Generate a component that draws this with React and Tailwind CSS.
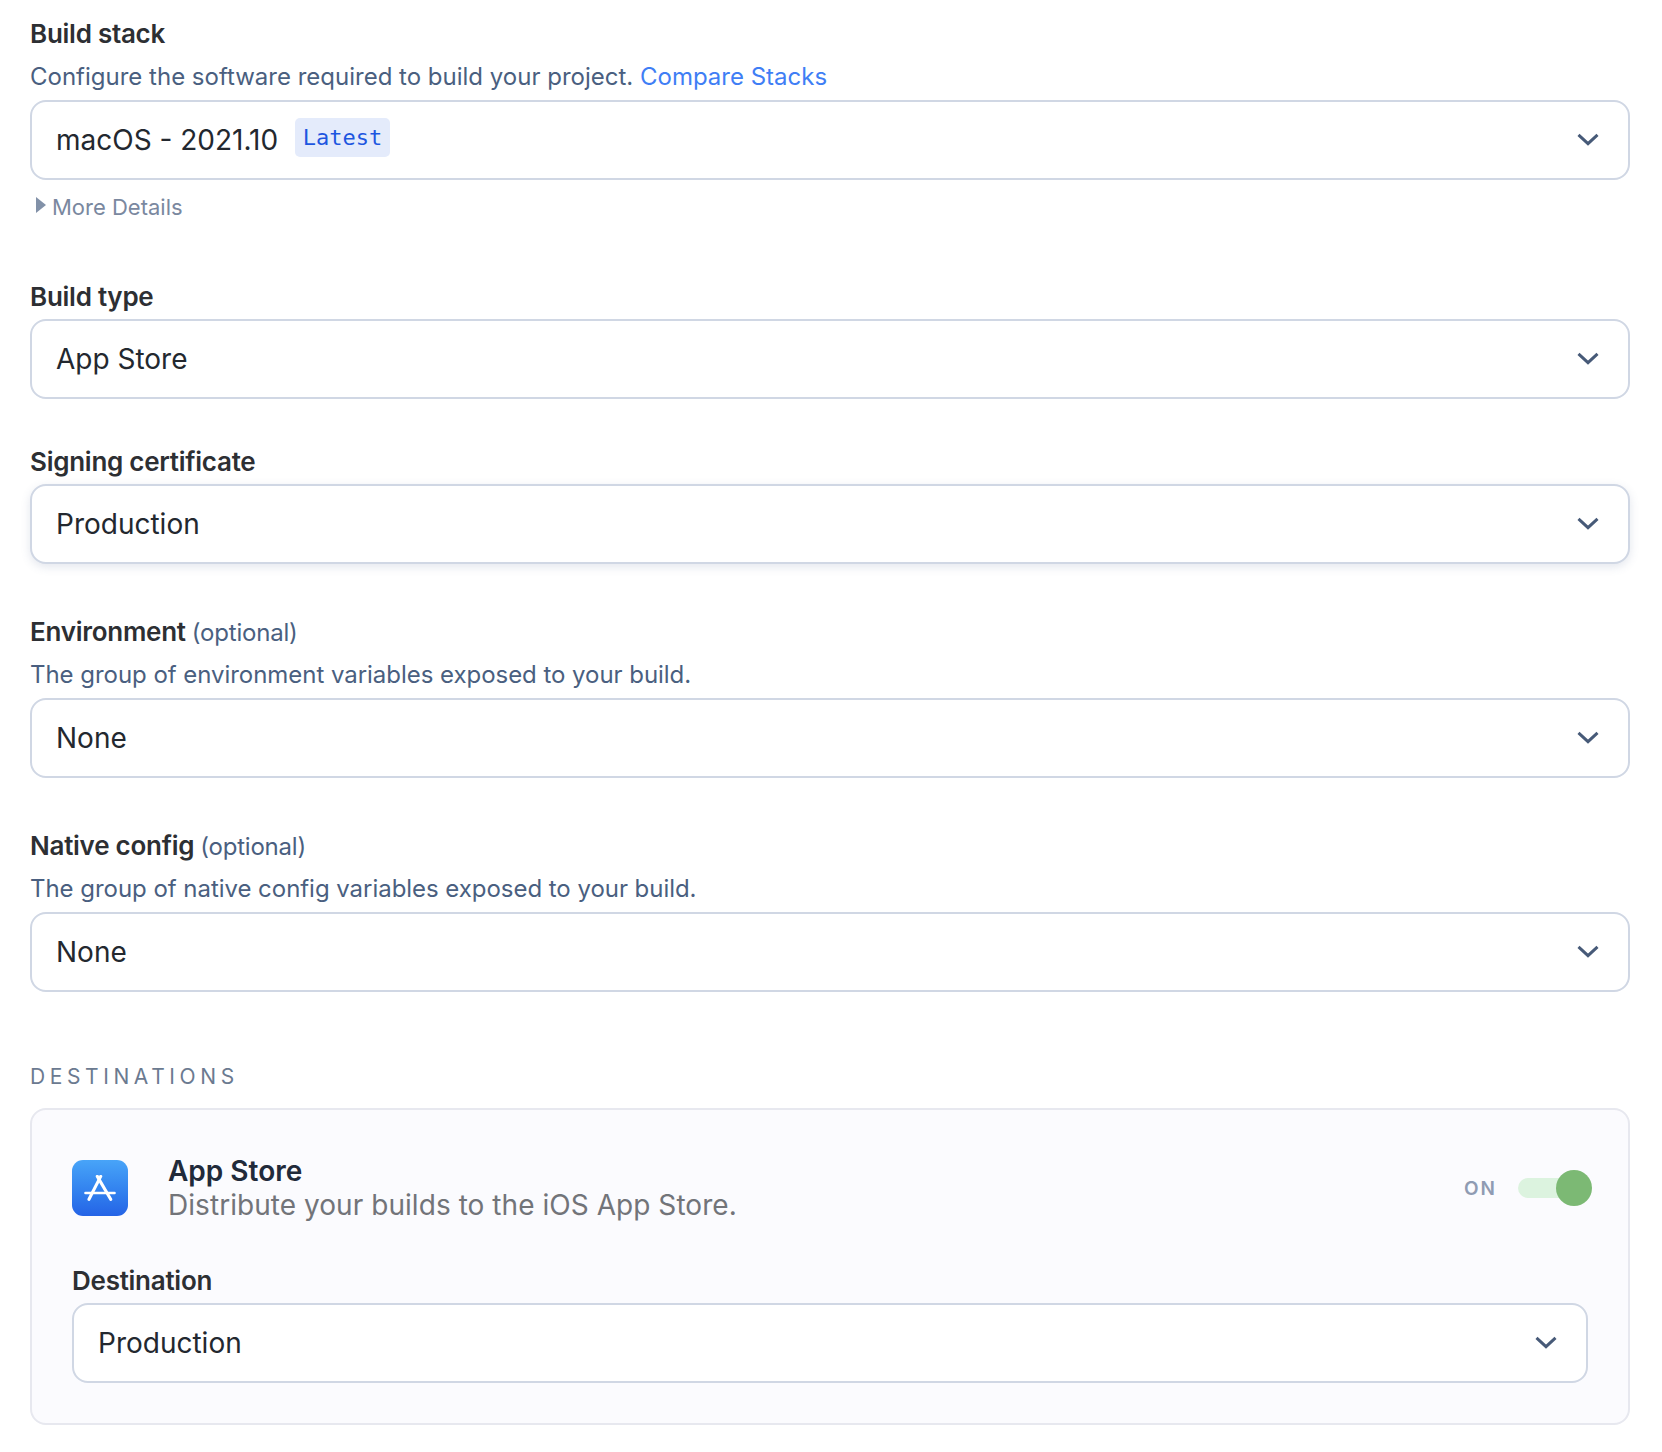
function Chevron() {
  return (
    <svg width="22" height="13" viewBox="0 0 22 13" fill="none" className="mb-[2px] shrink-0">
      <path d="M1.5 1.8 L11 10.6 L20.5 1.8" stroke="#475a78" strokeWidth="3" />
    </svg>
  );
}

function Select({ children, className = "" }) {
  return (
    <div className={`flex h-[80px] items-center justify-between rounded-[16px] border-2 border-[#d0d7e4] bg-white pl-[24px] pr-[29px] ${className}`}>
      <div className="flex items-center text-[28px] leading-[40px] text-[#23282f]">{children}</div>
      <Chevron />
    </div>
  );
}

function Label({ children, optional }) {
  return (
    <div className="text-[26px] font-semibold leading-[36px] tracking-[-0.26px] text-[#2d2f33]">
      {children}
      {optional && <span className="ml-[6px] text-[24px] font-normal tracking-[-0.2px] text-[#4a5f80]">(optional)</span>}
    </div>
  );
}

function Desc({ children, className = "" }) {
  return <div className={`text-[24px] leading-[36px] text-[#4a5f80] ${className}`}>{children}</div>;
}

function AppStoreIcon() {
  return (
    <div className="flex h-[56px] w-[56px] shrink-0 items-center justify-center rounded-[11px] bg-gradient-to-b from-[#48a4f8] to-[#2563e6]">
      <svg width="32" height="26" viewBox="0 0 32 26" fill="none" stroke="white" strokeLinecap="round">
        <path d="M16.7 1.4 L5 24.3" strokeWidth="3.1" />
        <path d="M13.3 1.4 L26.7 24.3" strokeWidth="3.1" />
        <path d="M1.5 18 H30.5" strokeWidth="2.6" />
      </svg>
    </div>
  );
}

export default function App() {
  return (
    <div className="min-h-[1452px] bg-white pl-[30px] pr-[32px] pt-[16px] font-['Inter',sans-serif]">
      <Label>Build stack</Label>
      <div className="mt-[7px] mb-[5px]">
        <Desc>
          Configure the software required to build your project. <span className="text-[#3f7ef5]">Compare Stacks</span>
        </Desc>
      </div>
      <Select>
        <span>macOS - 2021.10</span>
        <span className="ml-[17px] mb-[5px] flex h-[39px] items-center rounded-[5px] bg-[#e4ebfb] px-[7.5px] font-['DejaVu_Sans_Mono',monospace] text-[22px] text-[#1d56e0]">Latest</span>
      </Select>
      <div className="mt-[11px] flex h-[32px] items-center pl-[6px] text-[22px] text-[#7a889f]">
        <span className="mr-[6px] mb-[4px] h-0 w-0 border-y-[8px] border-l-[10px] border-y-transparent border-l-[#8291a8]" />
        More Details
      </div>

      <div className="mt-[56px] mb-[4px]"><Label>Build type</Label></div>
      <Select>App Store</Select>

      <div className="mt-[45px] mb-[4px]"><Label>Signing certificate</Label></div>
      <Select className="shadow-[0_3px_10px_rgba(80,100,140,0.16)]">Production</Select>

      <div className="mt-[50px]"><Label optional>Environment</Label></div>
      <div className="mt-[6px] mb-[5px]"><Desc className="tracking-[-0.04px]">The group of environment variables exposed to your build.</Desc></div>
      <Select>None</Select>

      <div className="mt-[50px]"><Label optional>Native config</Label></div>
      <div className="mt-[6px] mb-[5px]"><Desc className="tracking-[-0.04px]">The group of native config variables exposed to your build.</Desc></div>
      <Select>None</Select>

      <div className="mt-[71px] text-[21px] leading-[28px] tracking-[4.6px] text-[#6b7a90]">DESTINATIONS</div>

      <div className="mt-[17px] rounded-[16px] border-2 border-[#e7e8ef] bg-[#fbfbfe] pb-[40px] pl-[40px] pr-[40px] pt-[44px]">
        <div className="flex items-center">
          <AppStoreIcon />
          <div className="ml-[40px] flex-1">
            <div className="text-[28px] font-semibold leading-[34px] text-[#212a3a]">App Store</div>
            <div className="text-[28px] leading-[34px] tracking-[0.05px] text-[#727479]">Distribute your builds to the iOS App Store.</div>
          </div>
          <div className="mt-[2px] text-[19px] font-semibold leading-[28px] tracking-[2px] text-[#8f9bb3]">ON</div>
          <div className="relative ml-[21px] mr-[-4px] h-[20px] w-[74px]">
            <div className="absolute left-0 top-0 h-[20px] w-[60px] rounded-full bg-[#dcf3df]" />
            <div className="absolute right-0 top-[-8px] h-[36px] w-[36px] rounded-full bg-[#7cb974]" />
          </div>
        </div>
        <div className="mt-[41px] mb-[4px]"><Label>Destination</Label></div>
        <Select>Production</Select>
      </div>
    </div>
  );
}
